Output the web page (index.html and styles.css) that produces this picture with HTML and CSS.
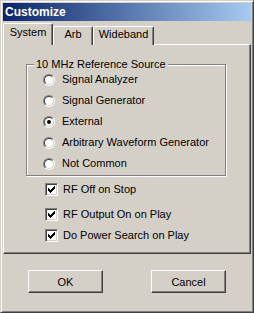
FILE: index.html
```html
<!DOCTYPE html>
<html lang="en">
<head>
  <meta charset="UTF-8" />
  <title>Customize</title>
  <link rel="stylesheet" href="styles.css">
</head>
<body>
  <div class="window">
    <div class="titlebar">Customize</div>

    <div class="tabs">
      <div class="tab active">System</div>
      <div class="tab tab-arb">Arb</div>
      <div class="tab tab-wide">Wideband</div>
    </div>

    <div class="panel">
      <fieldset class="group">
        <legend>10 MHz Reference Source</legend>
        <div class="radios">
          <label class="row"><span class="radio"></span>Signal Analyzer</label>
          <label class="row"><span class="radio"></span>Signal Generator</label>
          <label class="row"><span class="radio on"></span>External</label>
          <label class="row"><span class="radio"></span>Arbitrary Waveform Generator</label>
          <label class="row"><span class="radio"></span>Not Common</label>
        </div>
      </fieldset>

      <div class="checks">
        <label class="row check-first"><span class="box"><svg width="7" height="7" viewBox="0 0 7 7" shape-rendering="crispEdges"><path d="M6 0h1v3h-1zM5 1h1v3h-1zM4 2h1v3h-1zM3 3h1v3h-1zM2 4h1v3h-1zM1 3h1v3h-1zM0 2h1v3h-1z" fill="#000"/></svg></span>RF Off on Stop</label>
        <label class="row check-second"><span class="box"><svg width="7" height="7" viewBox="0 0 7 7" shape-rendering="crispEdges"><path d="M6 0h1v3h-1zM5 1h1v3h-1zM4 2h1v3h-1zM3 3h1v3h-1zM2 4h1v3h-1zM1 3h1v3h-1zM0 2h1v3h-1z" fill="#000"/></svg></span>RF Output On on Play</label>
        <label class="row"><span class="box"><svg width="7" height="7" viewBox="0 0 7 7" shape-rendering="crispEdges"><path d="M6 0h1v3h-1zM5 1h1v3h-1zM4 2h1v3h-1zM3 3h1v3h-1zM2 4h1v3h-1zM1 3h1v3h-1zM0 2h1v3h-1z" fill="#000"/></svg></span>Do Power Search on Play</label>
      </div>
    </div>

    <div class="buttons">
      <button class="btn btn-ok">OK</button>
      <button class="btn btn-cancel">Cancel</button>
    </div>
  </div>
</body>
</html>
```

FILE: styles.css
```css
* { box-sizing: border-box; }
body {
  margin: 0; background: #d4d0c8;
  font-family: "Liberation Sans", Arial, sans-serif; font-size: 11px; color: #000;
}
.window {
  width: 254px; height: 313px; padding: 2px;
  border: 1px solid; border-color: #d4d0c8 #404040 #404040 #d4d0c8;
  box-shadow: inset 1px 1px 0 #fff, inset -1px -1px 0 #808080;
  background: #d4d0c8;
}
.titlebar {
  height: 18px; line-height: 18px; padding-left: 2px;
  background: linear-gradient(to right, #0a246a, #a6caf0);
  color: #fff; font-weight: bold; font-size: 12px;
}

/* tab strip */
.tabs {
  display: flex; align-items: flex-end; height: 22px; margin-top: 2px;
  position: relative; z-index: 1;
}
.tab {
  height: 19px; padding-top: 1px; line-height: 13px; text-align: center;
  border: 1px solid; border-bottom: none;
  border-color: #fff #404040 #fff #fff;
  border-radius: 2px 2px 0 0;
  box-shadow: inset -1px 0 0 #808080;
  background: #d4d0c8;
}
.tab.active { height: 22px; width: 50px; padding-top: 2px; }
.tab-arb { width: 40px; }
.tab-wide { width: 61px; }

.panel {
  height: 210px; margin-top: -1px;
  border: 1px solid; border-color: #fff #404040 #404040 #fff;
  box-shadow: inset -1px -1px 0 #808080;
}

/* group box */
.group {
  width: 200px; height: 118px; min-width: 0;
  margin: 13px 0 0 22px; padding: 0;
  border: 1px solid #808080;
  box-shadow: 1px 1px 0 #fff, inset 1px 1px 0 #fff;
}
.group legend {
  margin-left: 7px; padding: 0 2px; line-height: 13px;
  background: #d4d0c8;
}
.radios { margin-top: -2px; padding-left: 16px; }
.row {
  display: flex; align-items: center; gap: 7px; height: 21px; line-height: 13px;
}
.radio {
  position: relative; width: 12px; height: 12px; flex: none;
  border: 1px solid; border-radius: 50%;
  border-color: #808080 #fff #fff #808080;
}
.radio::before {
  content: ""; position: absolute; inset: 0;
  border: 1px solid; border-radius: 50%;
  border-color: #404040 #d4d0c8 #d4d0c8 #404040;
  background: #fff;
}
.radio.on::after {
  content: ""; position: absolute; left: 3px; top: 3px;
  width: 4px; height: 4px; border-radius: 50%; background: #000;
}

/* checkboxes */
.checks { margin-left: 41px; }
.check-first { margin-top: 3px; }
.check-second { margin-bottom: 0; margin-top: 4px; }
.checks .row { gap: 5px; }
.box {
  display: flex; align-items: center; justify-content: center;
  width: 13px; height: 13px; flex: none;
  border: 1px solid; border-color: #808080 #fff #fff #808080;
  box-shadow: inset 1px 1px 0 #404040, inset -1px -1px 0 #d4d0c8;
  background: #fff;
}

/* dialog buttons */
.buttons { display: flex; margin-top: 16px; }
.btn {
  width: 75px; height: 23px; padding: 0;
  font: inherit; color: #000; background: #d4d0c8;
  border: 1px solid; border-color: #fff #404040 #404040 #fff;
  box-shadow: inset -1px -1px 0 #808080;
}
.btn-ok { margin-left: 25px; }
.btn-cancel { margin-left: 48px; }
```
